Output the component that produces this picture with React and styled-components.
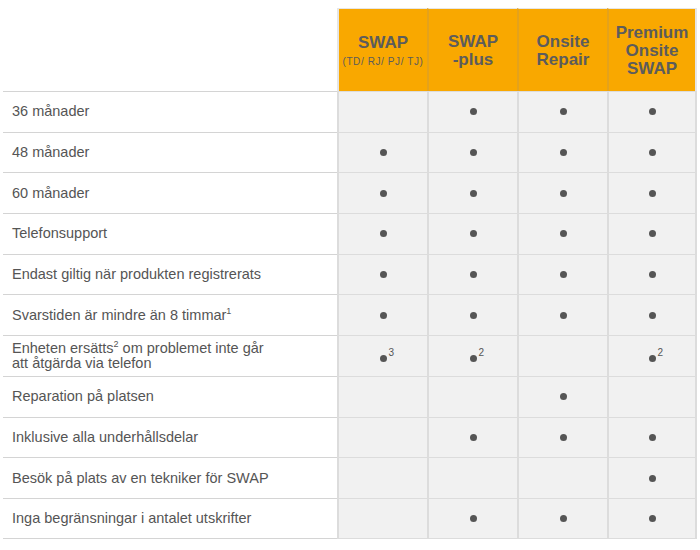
import React from 'react'
import styled, { createGlobalStyle } from 'styled-components'

const GlobalStyle = createGlobalStyle`
body {
  margin: 0;
  background: #ffffff;
  font-family: "Liberation Sans", Arial, sans-serif;
}
* { box-sizing: border-box; }
`;

const Wrapper = styled.div`
padding: 8px 0 0 3px;
width: 700px;
color: #555555;
`;

const Grid = styled.div`
display: grid;
grid-template-columns: 334px repeat(4, 90px);
grid-template-rows: 83px;
grid-auto-rows: 40.7px;
width: 696px;
`;

const Corner = styled.div``;

const HeadCell = styled.div`
display: flex;
flex-direction: column;
align-items: center;
justify-content: center;
background: #f9a800;
border-top: 1px solid #e6e6e6;
border-left: 2px solid ${p => p.first ? '#e6e6e6' : '#e4a21c'};
border-right: ${p => p.last ? '2px solid #e6e6e6' : 'none'};
font-size: 17px;
font-weight: bold;
line-height: 18px;
color: #5c5c5c;
text-align: center;
padding-top: ${p => p.sub ? '2px' : '1px'};
`;

const SubTitle = styled.div`
font-size: 10px;
font-weight: normal;
line-height: 12px;
margin-top: 4px;
letter-spacing: 0.6px;
white-space: nowrap;
`;

const Label = styled.div`
display: flex;
align-items: center;
padding: 0 0 0 9px;
font-size: 14.5px;
line-height: 15px;
border-top: 1px solid #d4d4d4;
border-bottom: ${p => p.last ? '1px solid #d4d4d4' : 'none'};
`;

const Cell = styled.div`
display: flex;
align-items: center;
justify-content: center;
background: #f1f1f1;
border-top: 1px solid #dcdcdc;
border-bottom: ${p => p.lastRow ? '1px solid #dcdcdc' : 'none'};
border-left: 2px solid #dcdcdc;
border-right: ${p => p.last ? '2px solid #dcdcdc' : 'none'};
`;

const Dot = styled.span`
position: relative;
display: block;
width: 7px;
height: 7px;
border-radius: 50%;
background: #555555;
margin-top: ${p => p.note ? '5px' : '0'};
`;

const DotNote = styled.span`
position: absolute;
left: 9px;
top: -7px;
font-size: 10px;
line-height: 10px;
color: #555555;
`;

const Note = styled.sup`
font-size: 9px;
line-height: 0;
vertical-align: 6px;
`;

const heads = [
  { title: ['SWAP'], sub: '(TD/ RJ/ PJ/ TJ)' },
  { title: ['SWAP', '-plus'] },
  { title: ['Onsite', 'Repair'] },
  { title: ['Premium', 'Onsite', 'SWAP'] },
];

const rows = [
  { label: '36 månader', marks: [0, 1, 1, 1] },
  { label: '48 månader', marks: [1, 1, 1, 1] },
  { label: '60 månader', marks: [1, 1, 1, 1] },
  { label: 'Telefonsupport', marks: [1, 1, 1, 1] },
  { label: 'Endast giltig när produkten registrerats', marks: [1, 1, 1, 1] },
  { label: <span>Svarstiden är mindre än 8 timmar<Note>1</Note></span>, marks: [1, 1, 1, 1] },
  {
    label: <span>Enheten ersätts<Note>2</Note> om problemet inte går<br />att åtgärda via telefon</span>,
    marks: ['3', '2', 0, '2'],
  },
  { label: 'Reparation på platsen', marks: [0, 0, 1, 0] },
  { label: 'Inklusive alla underhållsdelar', marks: [0, 1, 1, 1] },
  { label: 'Besök på plats av en tekniker för SWAP', marks: [0, 0, 0, 1] },
  { label: 'Inga begränsningar i antalet utskrifter', marks: [0, 1, 1, 1] },
];

function Mark({ value }) {
  if (!value) return null;
  if (typeof value === 'string') {
    return <Dot note><DotNote>{value}</DotNote></Dot>;
  }
  return <Dot />;
}

export default function App() {
  return (
    <React.Fragment>
      <GlobalStyle />
      <Wrapper>
        <Grid>
          <Corner />
          {heads.map((h, i) => (
            <HeadCell key={i} first={i === 0} last={i === heads.length - 1} sub={!!h.sub}>
              {h.title.map((t, j) => <div key={j}>{t}</div>)}
              {h.sub && <SubTitle>{h.sub}</SubTitle>}
            </HeadCell>
          ))}
          {rows.map((r, i) => {
            const lastRow = i === rows.length - 1;
            return (
              <React.Fragment key={i}>
                <Label last={lastRow}>{r.label}</Label>
                {r.marks.map((m, j) => (
                  <Cell key={j} last={j === r.marks.length - 1} lastRow={lastRow}>
                    <Mark value={m} />
                  </Cell>
                ))}
              </React.Fragment>
            );
          })}
        </Grid>
      </Wrapper>
    </React.Fragment>
  )
}
